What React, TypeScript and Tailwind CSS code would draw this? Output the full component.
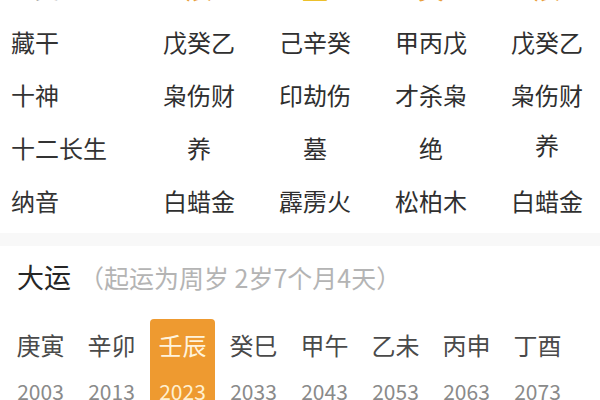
import React from "react";

const FONT = { fontFamily: '"Noto Sans CJK SC", "Noto Sans", sans-serif' };

type Row = { label: string; values: string[] };

const rows: Row[] = [
  { label: "地支", values: ["辰", "丑", "寅", "辰"] },
  { label: "藏干", values: ["戊癸乙", "己辛癸", "甲丙戊", "戊癸乙"] },
  { label: "十神", values: ["枭伤财", "印劫伤", "才杀枭", "枭伤财"] },
  { label: "十二长生", values: ["养", "墓", "绝", "养"] },
  { label: "纳音", values: ["白蜡金", "霹雳火", "松柏木", "白蜡金"] },
];

const topColors = ["text-[#e9a03c]", "text-[#ecc02c]", "text-[#e9a03c]", "text-[#e9a03c]"];

const dayun = [
  { gz: "庚寅", y: "2003" },
  { gz: "辛卯", y: "2013" },
  { gz: "壬辰", y: "2023", active: true },
  { gz: "癸巳", y: "2033" },
  { gz: "甲午", y: "2043" },
  { gz: "乙未", y: "2053" },
  { gz: "丙申", y: "2063" },
  { gz: "丁酉", y: "2073" },
];

export default function App() {
  return (
    <div className="w-[600px] h-[400px] overflow-hidden bg-white" style={FONT}>
      <div className="-mt-[40px]">
        {rows.map((r, i) => (
          <div
            key={r.label}
            className={`grid grid-cols-[141px_116px_116px_116px_116px] items-center ${
              i === 0 ? "h-[55px]" : "h-[53px]"
            }`}
          >
            <div className="pl-[11px] text-[24px] leading-[30px] text-[#333333]">{r.label}</div>
            {r.values.map((v, j) => (
              <div
                key={j}
                className={`text-center leading-[30px] ${
                  i === 0 ? `text-[26px] ${topColors[j]}` : "text-[24px] text-[#2f2f2f]"
                } ${i === 3 && j === 3 ? "-mt-[6px]" : ""}`}
              >
                {v}
              </div>
            ))}
          </div>
        ))}
      </div>
      <div className="h-[13px] mt-[6px] bg-[#f8f8f8]" />
      <div className="flex items-center pt-[17px] pl-[17px] h-[45px]">
        <span className="text-[27px] leading-[28px] text-[#262626]">大运</span>
        <span className="ml-[8px] text-[25px] leading-[28px] text-[#b4b4b4]">
          （起运为周岁 2岁7个月4天）
        </span>
      </div>
      <div className="flex gap-[6px] pl-[8px] mt-[28px]">
        {dayun.map((d) => (
          <div
            key={d.gz}
            className={`w-[65px] h-[90px] flex flex-col items-center pt-[12px] rounded-t-[4px] ${
              d.active ? "bg-[#ee9a30]" : ""
            }`}
          >
            <div
              className={`text-[24px] leading-[28px] ${
                d.active ? "text-[#fff3dc]" : "text-[#4a4a4a]"
              }`}
            >
              {d.gz}
            </div>
            <div
              className={`mt-[20px] text-[21px] leading-[24px] ${
                d.active ? "text-[#fff0d0]" : "text-[#8a8a8a]"
              }`}
            >
              {d.y}
            </div>
          </div>
        ))}
      </div>
    </div>
  );
}
